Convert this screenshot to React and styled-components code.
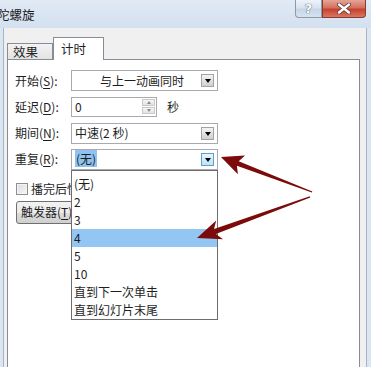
import React from "react";
import styled, { createGlobalStyle } from "styled-components";

const GlobalStyle = createGlobalStyle`
  html, body { margin: 0; padding: 0; }
  body {
    width: 371px;
    height: 367px;
    overflow: hidden;
    background: #f0f0f0;
    font-family: "Noto Sans CJK SC", "Noto Sans", sans-serif;
    font-size: 12px;
    color: #1e1e1e;
  }
  u { text-underline-offset: 2px; }
`;

const Window = styled.div`
  position: relative;
  width: 371px;
  height: 367px;
  display: flex;
  flex-direction: column;
  background: #dbe6f3;
  overflow: hidden;
`;

// 标题栏
const TitleBar = styled.div`
  height: 28px;
  flex: none;
  display: flex;
  align-items: flex-start;
  background: linear-gradient(to bottom, #e1eaf5, #d3e0ef);
`;

const TitleText = styled.div`
  flex: 1;
  margin: 7px 0 0 -3px;
  font-size: 12.5px;
  line-height: 16px;
  color: #1a1a1a;
`;

const CaptionButton = styled.div`
  height: 18px;
  width: ${(p) => p.$w}px;
  box-sizing: border-box;
  display: flex;
  align-items: center;
  justify-content: center;
  border: 1px solid ${(p) => (p.$close ? "#8a3a33" : "#8e99a8")};
  border-top: none;
  border-radius: ${(p) => (p.$close ? "0 0 4px 0" : "0 0 0 4px")};
  background: ${(p) =>
    p.$close
      ? "linear-gradient(to bottom, #e4a597 0%, #d5705f 45%, #c7412f 55%, #d87762 100%)"
      : "linear-gradient(to bottom, #eef3f9 0%, #d9e4f1 45%, #c6d5e7 55%, #d6e3f1 100%)"};
  color: #fff;
  font-family: "DejaVu Sans", sans-serif;
  font-weight: bold;
  font-size: 13px;
  text-shadow: 0 0 1px #4a5563, 0 0 1px #4a5563;
`;

const Caption = styled.div`
  display: flex;
  margin-right: 5px;
`;

// 对话框主体
const Body = styled.div`
  flex: 1;
  margin: 0 4px 0 3px;
  border-left: 1px solid #a9b4c2;
  border-right: 1px solid #a9b4c2;
  background: #f0f0f0;
  padding: 9px 6px 0 3px;
  display: flex;
  flex-direction: column;
  min-height: 0;
`;

const TabStrip = styled.div`
  height: 22px;
  flex: none;
  display: flex;
  align-items: flex-end;
`;

const Tab = styled.div`
  position: relative;
  box-sizing: border-box;
  width: ${(p) => (p.$active ? 51 : 46)}px;
  height: ${(p) => (p.$active ? 23 : 16)}px;
  margin-bottom: ${(p) => (p.$active ? -1 : 0)}px;
  padding-left: ${(p) => (p.$active ? 7 : 5)}px;
  border: 1px solid #898c95;
  border-bottom: none;
  border-left: ${(p) => (p.$active ? "1px solid #898c95" : "1px solid #898c95")};
  background: ${(p) =>
    p.$active ? "#ffffff" : "linear-gradient(to bottom, #f3f3f3, #e3e3e3)"};
  z-index: ${(p) => (p.$active ? 2 : 1)};
  font-size: 12.5px;
  line-height: ${(p) => (p.$active ? 22 : 15)}px;
  display: flex;
  align-items: ${(p) => (p.$active ? "flex-start" : "center")};
`;

const Panel = styled.div`
  position: relative;
  flex: 1;
  min-height: 330px;
  background: #ffffff;
  border: 1px solid #898c95;
  padding: 10px 0 0 7px;
  display: flex;
  flex-direction: column;
`;

const Form = styled.div`
  display: flex;
  flex-direction: column;
  gap: 5.3px;
`;

const Row = styled.div`
  display: flex;
  align-items: center;
  height: 21px;
`;

const Label = styled.div`
  width: 56px;
  flex: none;
  line-height: 16px;
`;

const Select = styled.div`
  position: relative;
  box-sizing: border-box;
  width: 147px;
  height: 21px;
  border: 1px solid #a7abb1;
  background: #fff;
  display: flex;
  align-items: center;
  padding-left: 3px;
  z-index: ${(p) => (p.$open ? 5 : 1)};
`;

const SelectValue = styled.div`
  flex: 1;
  line-height: 16px;
  text-align: ${(p) => (p.$center ? "center" : "left")};
  padding-left: ${(p) => (p.$center ? 8 : 0)}px;
`;

const Highlight = styled.span`
  background: #8fc2f1;
  padding: 0 1px;
`;

const DropButton = styled.div`
  flex: none;
  box-sizing: border-box;
  width: 13px;
  height: 13px;
  margin-right: 3px;
  border: 1px solid ${(p) => (p.$hot ? "#5f9fcf" : "#a3a3a3")};
  background: ${(p) =>
    p.$hot
      ? "linear-gradient(to bottom, #e8f5fd, #bfe1f6)"
      : "linear-gradient(to bottom, #f4f4f4, #d0d0d0)"};
  display: flex;
  align-items: center;
  justify-content: center;

  &::after {
    content: "";
    border-left: 3.5px solid transparent;
    border-right: 3.5px solid transparent;
    border-top: 4px solid #000;
    margin-top: 1px;
  }
`;

const SpinBox = styled.div`
  box-sizing: border-box;
  width: 86px;
  height: 20px;
  border: 1px solid #a7abb1;
  background: #fff;
  display: flex;
  align-items: center;
  padding-left: 3px;
`;

const SpinValue = styled.div`
  flex: 1;
  line-height: 16px;
`;

const Spinner = styled.div`
  width: 13px;
  margin-right: 1px;
  display: flex;
  flex-direction: column;
  gap: 1px;
`;

const SpinArrow = styled.div`
  box-sizing: border-box;
  height: 7px;
  border: 1px solid #c9c9c9;
  background: linear-gradient(to bottom, #f6f6f6, #e2e2e2);
  display: flex;
  align-items: center;
  justify-content: center;

  &::after {
    content: "";
    border-left: 2.5px solid transparent;
    border-right: 2.5px solid transparent;
    ${(p) => (p.$up ? "border-bottom" : "border-top")}: 3px solid #8a8a8a;
  }
`;

const Unit = styled.div`
  margin-left: 10px;
  line-height: 16px;
`;

const CheckRow = styled.div`
  display: flex;
  align-items: center;
  margin: 11px 0 0 1px;
  height: 16px;
`;

const CheckBox = styled.div`
  box-sizing: border-box;
  width: 12px;
  height: 12px;
  border: 1px solid #8f8f8f;
  background: linear-gradient(135deg, #dcdcdc, #f7f7f7);
  box-shadow: inset 0 0 0 1px #f4f4f4;
  margin-right: 3px;
`;

const TriggerButton = styled.div`
  box-sizing: border-box;
  width: 84px;
  height: 23px;
  margin: 4px 0 0 1px;
  padding-left: 4px;
  border: 1px solid #707070;
  border-radius: 3px;
  background: linear-gradient(to bottom, #f2f2f2 0%, #ebebeb 50%, #dddddd 51%, #cfcfcf 100%);
  display: flex;
  align-items: center;
  line-height: 16px;
`;

// 下拉列表
const DropList = styled.div`
  position: absolute;
  top: 20px;
  left: -1px;
  width: 147px;
  box-sizing: border-box;
  border: 1px solid #6e6e6e;
  background: #fff;
  padding: 4px 0 0 0;
`;

const Option = styled.div`
  height: 18px;
  line-height: 18px;
  padding-left: 2px;
  background: ${(p) => (p.$active ? "#93c6f3" : "transparent")};
`;

const Overlay = styled.svg`
  position: absolute;
  left: 0;
  top: 0;
  pointer-events: none;
  z-index: 20;
`;

const options = ["(无)", "2", "3", "4", "5", "10", "直到下一次单击", "直到幻灯片末尾"];

const App = () => {
  return (
    <>
      <GlobalStyle />
      <Window>
        <TitleBar>
          <TitleText>陀螺旋</TitleText>
          <Caption>
            <CaptionButton $w={27}>?</CaptionButton>
            <CaptionButton $w={44} $close>
              <svg width="14" height="11" viewBox="0 0 14 11">
                <path d="M2 1.5 L12 9.5 M12 1.5 L2 9.5" stroke="#5a3a36" strokeWidth="4" strokeLinecap="round" />
                <path d="M2 1.5 L12 9.5 M12 1.5 L2 9.5" stroke="#ffffff" strokeWidth="2.4" strokeLinecap="round" />
              </svg>
            </CaptionButton>
          </Caption>
        </TitleBar>

        <Body>
          <TabStrip>
            <Tab>效果</Tab>
            <Tab $active>计时</Tab>
          </TabStrip>
          <Panel>
            <Form>
              <Row>
                <Label>
                  开始(<u>S</u>):
                </Label>
                <Select>
                  <SelectValue $center>与上一动画同时</SelectValue>
                  <DropButton />
                </Select>
              </Row>
              <Row>
                <Label>
                  延迟(<u>D</u>):
                </Label>
                <SpinBox>
                  <SpinValue>0</SpinValue>
                  <Spinner>
                    <SpinArrow $up />
                    <SpinArrow />
                  </Spinner>
                </SpinBox>
                <Unit>秒</Unit>
              </Row>
              <Row>
                <Label>
                  期间(<u>N</u>):
                </Label>
                <Select>
                  <SelectValue>中速(2 秒)</SelectValue>
                  <DropButton />
                </Select>
              </Row>
              <Row>
                <Label>
                  重复(<u>R</u>):
                </Label>
                <Select $open>
                  <SelectValue>
                    <Highlight>(无)</Highlight>
                  </SelectValue>
                  <DropButton $hot />
                  <DropList>
                    {options.map((o) => (
                      <Option key={o} $active={o === "4"}>
                        {o}
                      </Option>
                    ))}
                  </DropList>
                </Select>
              </Row>
            </Form>
            <CheckRow>
              <CheckBox />
              播完后快退
            </CheckRow>
            <TriggerButton>
              触发器(<u>T</u>)
            </TriggerButton>
          </Panel>
        </Body>

        <Overlay width="371" height="367" viewBox="0 0 371 367">
          <polygon
            points="221,157 245.1,155.6 238.7,161.2 312.3,191.4 311.8,192.6 236.9,165.8 237.9,174.2"
            fill="#7b0b0b"
          />
          <polygon
            points="197,238 216.2,220.4 214,229.1 309.8,196.3 310.3,197.6 215.8,233.9 223,239.2"
            fill="#7b0b0b"
          />
        </Overlay>
      </Window>
    </>
  );
};

export default App;
